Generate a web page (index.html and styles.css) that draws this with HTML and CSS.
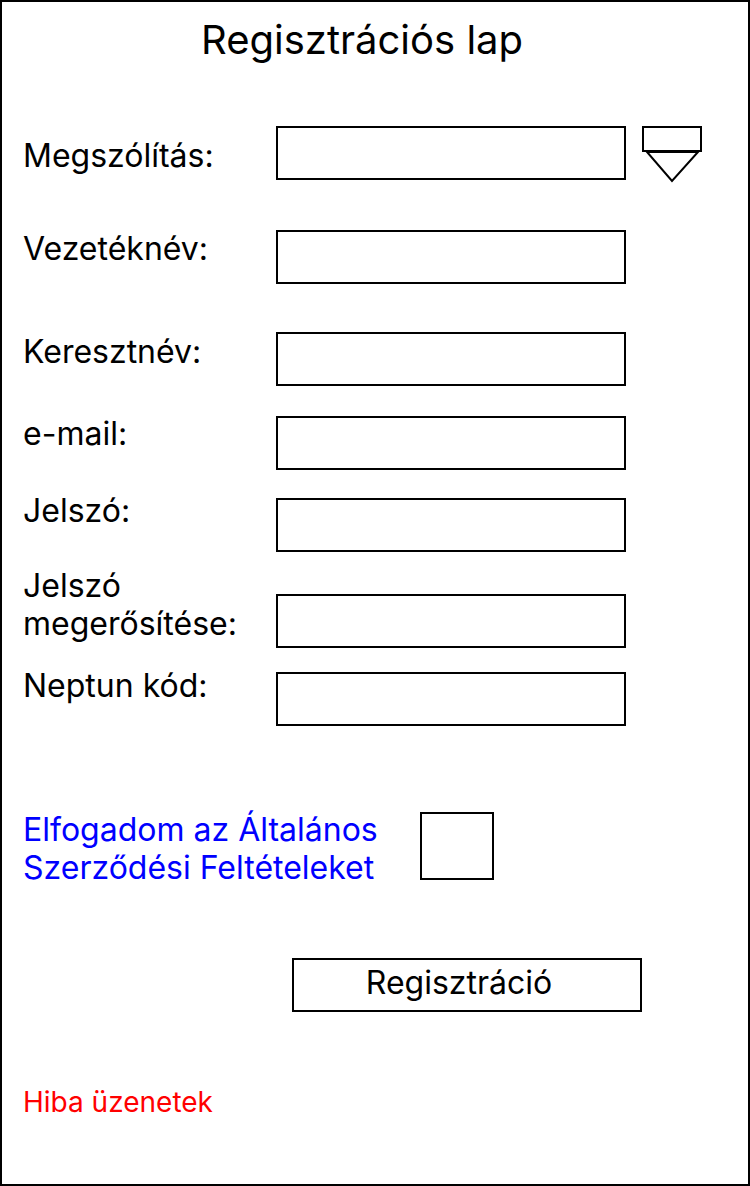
FILE: index.html
```html
<!DOCTYPE html>
<html lang="hu">
<head>
<meta charset="utf-8">
<title>Regisztrációs lap</title>
<link rel="stylesheet" href="styles.css">
</head>
<body>
<div class="frame">
  <h1 class="title">Regisztrációs lap</h1>
  <div class="form">
    <div class="row row-salutation">
      <div class="label l-salutation">Megszólítás:</div>
      <div class="field"></div>
      <svg class="dropdown" width="62" height="58" viewBox="0 0 62 58">
        <rect x="2" y="2" width="58" height="24" fill="#fff" stroke="#000" stroke-width="2"/>
        <polygon points="6,27 57,27 31,56" fill="#fff" stroke="#000" stroke-width="2" stroke-linejoin="miter"/>
      </svg>
    </div>
    <div class="row row-last">
      <div class="label l-last">Vezetéknév:</div>
      <div class="field"></div>
    </div>
    <div class="row row-first">
      <div class="label l-first">Keresztnév:</div>
      <div class="field"></div>
    </div>
    <div class="row row-email">
      <div class="label l-email">e-mail:</div>
      <div class="field"></div>
    </div>
    <div class="row row-pass">
      <div class="label l-pass">Jelszó:</div>
      <div class="field"></div>
    </div>
    <div class="row row-pass2">
      <div class="label l-pass2">Jelszó<br>megerősítése:</div>
      <div class="field"></div>
    </div>
    <div class="row row-neptun">
      <div class="label l-neptun">Neptun kód:</div>
      <div class="field"></div>
    </div>
  </div>
  <div class="terms">
    <div class="terms-text">Elfogadom az Általános<br>Szerződési Feltételeket</div>
    <div class="checkbox"></div>
  </div>
  <div class="submit-row">
    <div class="button">Regisztráció</div>
  </div>
  <div class="errors">Hiba üzenetek</div>
</div>
</body>
</html>
```

FILE: styles.css
```css
* { box-sizing: border-box; }
html, body { margin: 0; padding: 0; background: #fff; }
body {
  font-family: Inter, "Noto Sans", "Liberation Sans", sans-serif;
  color: #000;
}
.frame {
  width: 750px;
  height: 1186px;
  border: 2px solid #000;
  padding: 0 0 0 21px;
  overflow: hidden;
}
.title {
  margin: 14px 0 0 -21px;
  padding-right: 26px;
  font-size: 40px;
  font-weight: 400;
  line-height: 48px;
  text-align: center;
}
.form { display: flex; flex-direction: column; }
.row { display: flex; align-items: flex-start; height: 54px; }
.label {
  width: 253px;
  flex: none;
  font-size: 32px;
  line-height: 38px;
  white-space: nowrap;
}
.field {
  width: 350px;
  height: 54px;
  border: 2px solid #000;
  flex: none;
}
.dropdown { display: block; margin-left: 15px; margin-top: -1px; flex: none; }
.row-salutation { margin-top: 62px; }
.row-last { margin-top: 50px; }
.row-first { margin-top: 48px; }
.row-email { margin-top: 30px; }
.row-pass { margin-top: 28px; }
.row-pass2 { margin-top: 42px; }
.row-neptun { margin-top: 24px; }
.l-salutation { margin-top: 11px; }
.l-last { margin-top: 0; }
.l-first { margin-top: 1px; }
.l-email { margin-top: -1px; }
.l-pass { margin-top: -6px; }
.l-pass2 { margin-top: -27px; }
.l-neptun { margin-top: -5px; }
.terms {
  display: flex;
  align-items: flex-start;
  height: 68px;
  margin-top: 86px;
}
.terms-text {
  width: 397px;
  flex: none;
  color: #0000ff;
  font-size: 32px;
  line-height: 38px;
  margin-top: -1px;
  white-space: nowrap;
}
.checkbox {
  width: 74px;
  height: 68px;
  border: 2px solid #000;
  flex: none;
}
.submit-row {
  display: flex;
  margin-top: 78px;
  padding-left: 269px;
}
.button {
  width: 350px;
  height: 54px;
  border: 2px solid #000;
  padding-right: 16px;
  font-size: 32px;
  line-height: 46px;
  text-align: center;
}
.errors {
  margin-top: 72px;
  color: #ff0000;
  font-size: 28px;
  line-height: 36px;
}
```
